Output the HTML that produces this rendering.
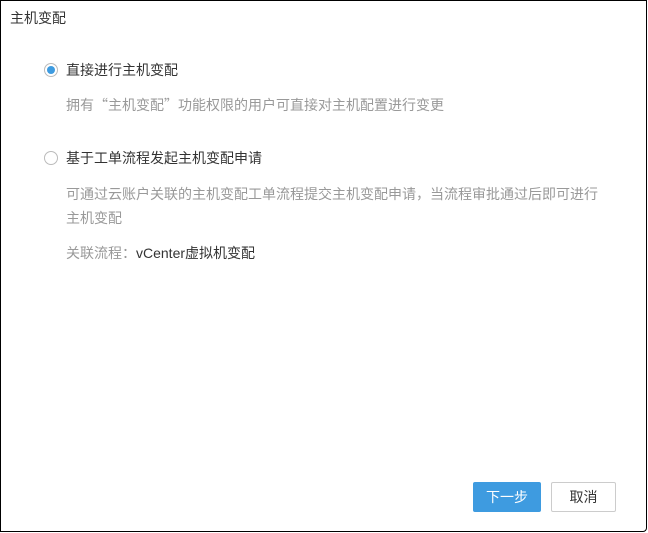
<!DOCTYPE html>
<html lang="zh-CN"><head><meta charset="utf-8"><style>
*{margin:0;padding:0;box-sizing:border-box}
body{width:648px;height:533px;background:#fff;font-family:"Liberation Sans","Noto Sans CJK SC",sans-serif;font-size:14px;color:#333;position:relative;overflow:hidden}
.frame{position:absolute;left:0;top:0;width:647px;height:532px;border:1px solid #000;border-radius:0 0 4px 0}
.t{position:absolute;white-space:nowrap;line-height:16px}
.g{color:#999}
.q{font-family:"Noto Sans CJK SC",sans-serif}
.radio{position:absolute;width:14px;height:14px;border:1px solid #bbb;border-radius:50%;background:#fff}
.radio.on::after{content:"";position:absolute;left:2px;top:2px;width:8px;height:8px;border-radius:50%;background:#3e9be0}
.btn{position:absolute;height:30px;line-height:28px;text-align:center;border-radius:2px;font-size:14px}
</style></head><body>
<div class="frame"></div>
<div class="t" style="left:10px;top:10px">主机变配</div>
<div class="radio on" style="left:44px;top:63px"></div>
<div class="t" style="left:66px;top:62px">直接进行主机变配</div>
<div class="t g" style="left:66px;top:97px">拥有<span class="q">“</span>主机变配<span class="q">”</span>功能权限的用户可直接对主机配置进行变更</div>
<div class="radio" style="left:44px;top:151px"></div>
<div class="t" style="left:66px;top:150px">基于工单流程发起主机变配申请</div>
<div class="t g" style="left:66px;top:186px">可通过云账户关联的主机变配工单流程提交主机变配申请，当流程审批通过后即可进行</div>
<div class="t g" style="left:66px;top:210px">主机变配</div>
<div class="t" style="left:66px;top:245px"><span class="g">关联流程：</span>vCenter虚拟机变配</div>
<div class="btn" style="left:473px;top:482px;width:68px;background:#3e9be0;color:#fff;border:1px solid #3e9be0">下一步</div>
<div class="btn" style="left:551px;top:482px;width:65px;background:#fff;border:1px solid #ccc;color:#333">取消</div>
</body></html>
